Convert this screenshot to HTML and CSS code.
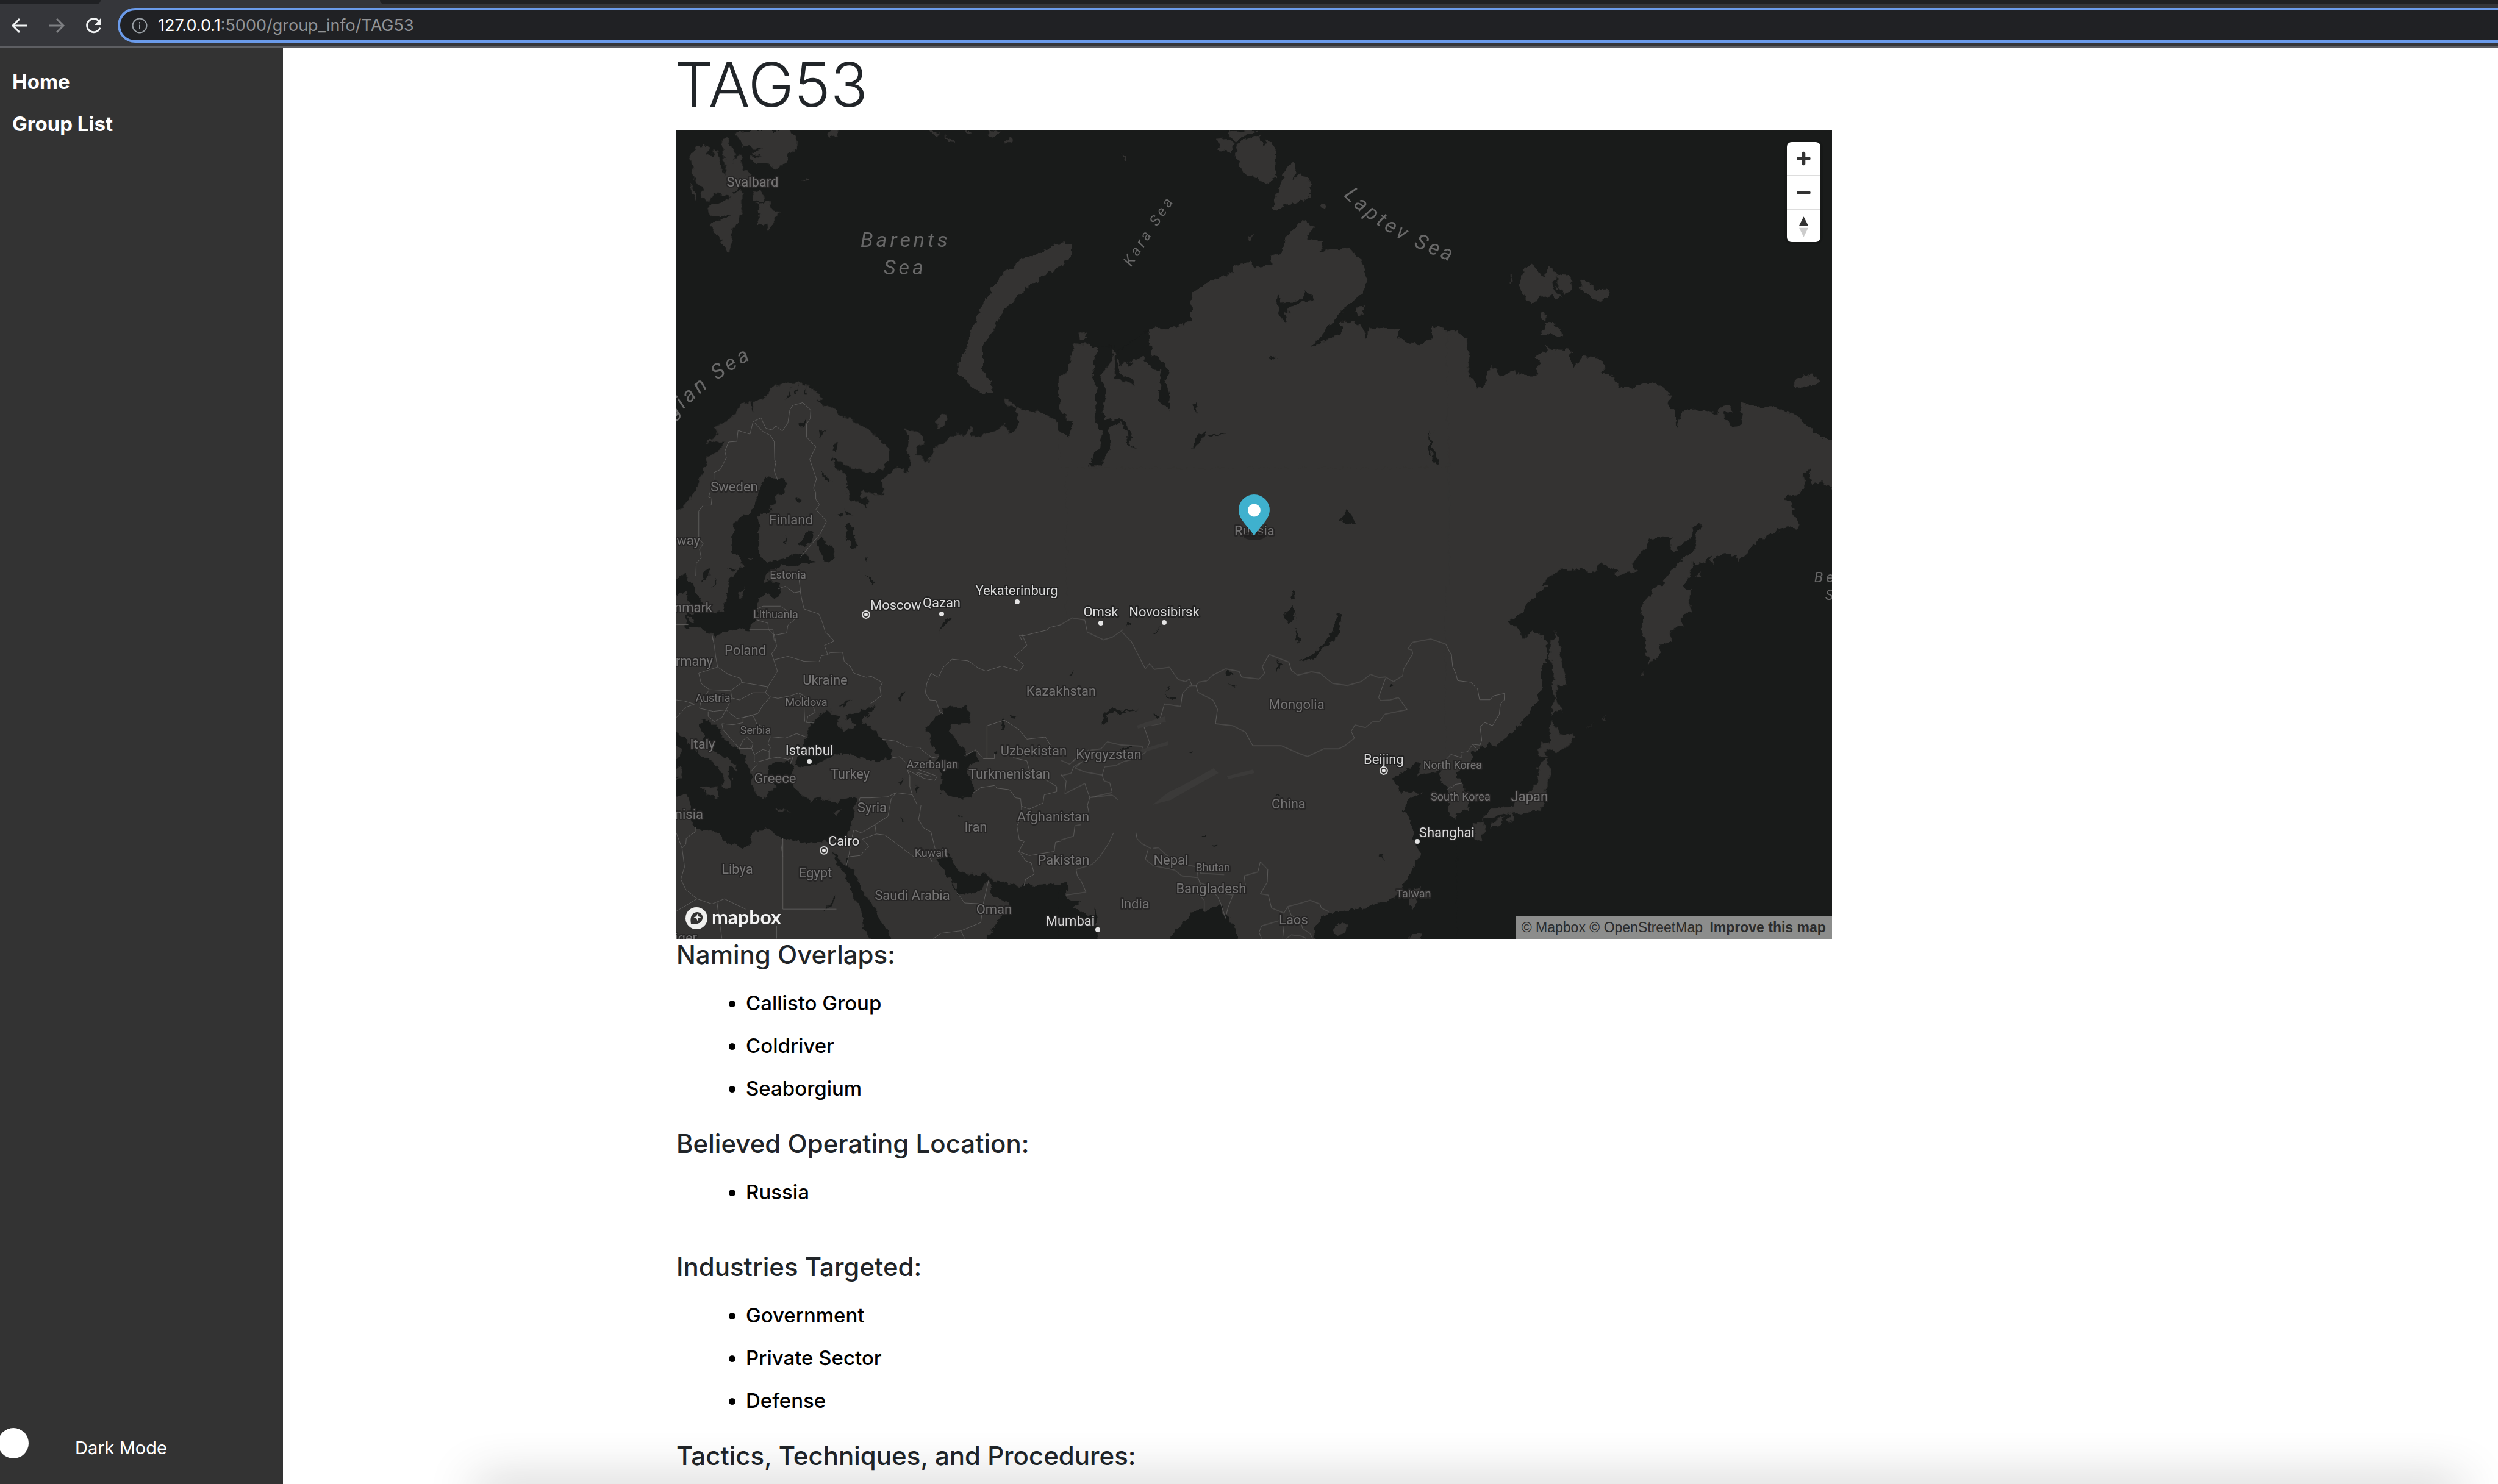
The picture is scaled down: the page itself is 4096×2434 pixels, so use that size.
FILE: index.html
```html
<!DOCTYPE html>
<html lang="en">
<head>
<meta charset="utf-8">
<title>TAG53</title>
<link rel="stylesheet" href="styles.css">
</head>
<body>
<header class="browser">
  <div class="tabs"><span class="tab-before"></span><span class="tab-active"></span><span class="tab-after"></span></div>
  <div class="toolbar">
    <button class="tool" type="button" aria-label="Back"><svg viewBox="0 0 32 32"><path d="M28 16H5M16 5L5 16l11 11"/></svg></button>
    <button class="tool tool-off" type="button" aria-label="Forward"><svg viewBox="0 0 32 32"><path d="M4 16h23M16 5l11 11-11 11"/></svg></button>
    <button class="tool" type="button" aria-label="Reload"><svg viewBox="0 0 32 32"><path d="M26 19.500A11 11 0 1 1 24 8.500"/><path class="solid" d="M28 3v12H17z"/></svg></button>
    <div class="address">
      <svg class="info" viewBox="0 0 28 28"><circle cx="14" cy="14" r="11.500"/><path d="M14 12.500v7.500M14 8v2.500"/></svg>
      <div class="url" role="textbox" aria-label="Address"><span class="host">127.0.0.1</span>:5000/group_info/TAG53</div>
    </div>
  </div>
</header>
<div class="layout">
  <aside class="sidebar">
    <nav class="nav">
      <a href="#home">Home</a>
      <a href="#groups">Group List</a>
    </nav>
    <label class="mode"><input type="checkbox" class="switch"><span>Dark Mode</span></label>
  </aside>
  <main class="main">
    <article class="group">
      <h1>TAG53</h1>
      <div class="map">
        <svg class="canvas" viewBox="1109 214 1895 1326" role="img" aria-label="Map">
          <defs>
            <filter id="rough" filterUnits="userSpaceOnUse" x="1080" y="180" width="1960" height="1390" color-interpolation-filters="sRGB">
              <feTurbulence type="fractalNoise" baseFrequency="0.09" numOctaves="3" seed="4"/>
              <feDisplacementMap in="SourceGraphic" scale="12" xChannelSelector="R" yChannelSelector="G"/>
            </filter>
            <path id="kara" d="M1855 438Q1880 398 1935 315"/>
            <path id="laptev" d="M2203 321Q2270 395 2410 440"/>
            <path id="norse" d="M1030 785Q1115 650 1235 587"/>
          </defs>
          <g filter="url(#rough)">
            <g class="land">
              <path d="M1618 485L1600 526 1590 554 1582 576 1569 597 1571 613 1594 633 1606 644 1631 645 1627 633 1612 604 1612 569 1627 544 1639 519 1663 490 1712 450 1740 437 1757 420 1757 402 1745 395 1731 403 1671 428 1651 445 1631 467z"/>
              <path d="M1730 750H2388V1050H1730z"/>
              <g transform="translate(1100 70) scale(.4082 .3333)">
                <path d="M75 545L105 515 155 510 140 545 165 560 180 520 195 560 205 620 220 660 205 480 225 475 245 510 265 545 250 590 275 550 290 600 285 625 325 640 300 700 240 735 290 730 290 800 270 890 245 920 243 1000 230 1028 203 990 215 970 170 930 160 890 240 850 155 855 150 810 230 775 245 755 175 745 150 787 120 750 130 710 95 690 85 600zM262 450L300 432 480 432 508 470 505 520 475 545 465 590 420 620 395 598 340 590 312 555 365 560 320 540 370 520 290 515 275 480zM325 740L370 730 375 780 335 775zM345 790L400 780 410 830 430 830 415 890 390 935 385 890 345 900 355 840zM625 465L640 432 670 432 665 455zM1035 435L1080 440 1065 460zM1170 432L1210 432 1200 448zM1270 460L1280 432 1330 440 1295 465zM1100 455L1145 493 1115 488zM1340 490L1365 468 1370 490zM70 680L100 740 108 785 85 740zM528 680L545 665 565 680 545 675z"/>
              </g>
              <g transform="translate(1100 490) scale(.4082 .35714)">
                <path d="M-12 990L60 950 100 880 125 800 150 730 190 695 215 655 140 662 190 622 175 590 230 560 290 480 370 465 400 410 470 385 530 385 570 420 608 455 590 475 660 510 690 545 730 555 790 600 850 655 875 690 880 735 860 775 800 802 720 775 670 745 645 722 662 762 708 820 705 870 715 920 750 935 785 962 795 935 757 890 770 872 835 908 855 892 842 840 905 770 955 802 966 745 950 710 957 635 938 600 1000 615 1022 665 985 680 985 715 1015 747 1050 735 1058 683 1130 630 1180 620 1205 580 1205 635 1240 635 1300 605 1345 575 1360 622 1385 610 1400 575 1385 500 1470 515 1530 550 1590 600V1580H-12zM1340 450L1385 490 1380 510 1342 480zM1068 545L1090 528 1115 555 1095 592 1070 590zM1590 360L1557 390 1560 530 1590 540z"/>
              </g>
              <path d="M1090 1035H2388V1560H1090z"/>
              <g transform="translate(1740 200) scale(.4082 .35714)">
                <path d="M-8 1178L20 1150 35 1100 55 1020 120 1025 145 1045 205 1030 220 1090 290 1070 350 1055 350 950 440 942 525 915 520 830 530 780 580 740 690 690 690 665 760 640 780 675 850 655 838 615 890 600 900 530 970 450 1020 480 985 525 1055 550 1040 605 1080 580 1160 580 1200 630 1225 690 1220 770 1180 820 1130 860 1100 910 1060 955 1005 1035 1070 998 1130 965 1120 915 1165 915 1210 940 1222 985 1240 945 1280 938 1355 955 1355 990 1400 1015 1450 1020 1485 1000 1490 940 1590 965V1590H-8zM665 40L790 36 740 60 705 90 685 65zM718 90L800 60 810 112 830 80 862 115 858 210 860 260 825 285 780 250 730 240 715 180 692 155zM630 78L665 72 700 100 680 138 632 130zM930 185L945 200 935 262 965 230 1000 285 1003 340 940 375 890 380 858 410 850 400 880 290 905 210zM1180 850L1215 848 1212 880 1190 893zM72 970L100 963 112 995 75 1005zM235 148L268 165 260 173zM1035 378L1068 378 1062 392zM748 540L770 520 765 548zM300 1020L315 1005 322 1040zM255 1080L285 1055 290 1070z"/>
              </g>
              <g transform="translate(2380 200) scale(.4082 .4209)">
                <path d="M-15 825L25 812 65 850 72 920 65 970 90 1020 120 1045 135 1020 145 970 160 948 205 993 240 972 300 985 345 985 350 930 332 915 385 892 375 868 400 885 470 890 520 912 570 915 605 930 617 955 600 970 650 995 672 1032 720 1035 780 1018 830 1022 880 1060 872 1110 905 1125 985 1120 1065 1138 1095 1098 1127 1105 1125 1130 1098 1130 1100 1155 1130 1188 1160 1185 1170 1155 1160 1095 1240 1110 1305 1110 1390 1150 1470 1220 1550 1275V1330H-15zM280 600L290 575 325 550 350 585 375 605 378 570 395 560 430 595 410 620 420 665 445 680 415 690 400 672 350 690 325 706 300 690 275 650zM425 600L450 588 487 615 475 660 455 670 425 650zM515 650L525 615 575 640 575 652 625 650 635 675 600 696 565 690zM345 823L370 815 385 785 410 778 440 808 444 840 390 828zM360 745L380 743 378 770 362 770zM237 595L248 605 240 633zM1375 1035L1380 1010 1410 985 1450 980 1473 1008 1450 1028z"/>
              </g>
              <g transform="translate(2500 700) scale(.3333)">
                <path d="M-370 60H1540V340L1495 280 1465 265 1415 280 1405 235 1415 205 1370 230 1380 300 1340 335 1285 340 1285 360 1315 370 1330 440 1350 470 1340 505 1290 490 1230 515 1150 560 1110 610 1050 668 1035 635 990 625 945 640 920 680 918 635 880 675 830 665 820 730 785 770 790 800 820 805 808 860 822 900 785 910 775 955 785 985 740 990 715 1020 715 1060 670 1075 668 1110 612 1180 600 1110 580 990 578 900 590 860 620 835 620 800 680 775 720 710 780 650 835 605 845 560 850 510 880 500 860 482 820 495 820 550 780 575 735 618 718 600 728 540 700 545 650 540 610 565 600 600 540 650 530 690 560 705 540 715 450 735 440 715 465 710 380 680 340 710 250 700 170 705 140 725 95 770 80 800 5 880-84 969H-370zM838 745L865 718 868 732z"/>
              </g>
              <g transform="translate(2380 950) scale(.4082 .38265)">
                <path d="M420 220L430 260 440 340 465 455 430 450 418 510 445 575 425 562 403 585 405 560 412 510 405 460 410 380 395 335 400 265 415 258zM400 610L440 660 487 665 490 700 460 715 435 745 400 725 375 735 380 760 352 760 348 730 365 695 390 705zM355 785L385 770 403 835 378 890 370 970 340 990 280 1010 250 1000 238 1045 225 1030 240 1000 115 1030 165 980 245 975 250 950 310 915 345 870zM155 1045L205 1020 200 1050 160 1068zM88 1050L130 1035 135 1080 115 1125 95 1115zM755 415L775 388 765 412zM542 640L580 610 550 632zM605 602L625 582 612 600z"/>
              </g>
            </g>
            <g class="water">
              <g transform="translate(1100 490) scale(.4082 .35714)">
                <path d="M380 820L455 830 460 885 430 900 400 965 350 1000 355 1080 350 1165 390 1210 450 1190 530 1165 585 1212 530 1220 450 1230 400 1245 385 1270 370 1305 400 1300 440 1305 435 1370 410 1380 385 1345 350 1380 345 1480 320 1500 310 1522 270 1515 175 1548 150 1520 140 1480 150 1440 210 1430 225 1360 235 1290 292 1220 270 1175 245 1160 250 1050 280 1005 335 965 350 900 360 850zM-12 1300L60 1265 95 1330 125 1400 170 1430 160 1540 110 1510 60 1510 60 1460 95 1440 70 1380 65 1350-12 1375zM585 1115L605 1100 658 1150 655 1195 615 1212zM705 1030L735 1050 735 1100 752 1130 735 1150 700 1090zM695 965L730 995 705 992zM645 690L668 655 665 695zM595 600L625 600 600 640zM600 790L652 845 620 830zM505 580L548 545 530 590zM515 1130L550 1060 575 1075 560 1120 530 1140zM455 1090L468 1130 460 1130zM775 1190L795 1195 785 1206zM780 1265L820 1300 810 1318zM120 1300L130 1260 160 1245 160 1270zM165 1330L180 1280 185 1290zM215 1238L265 1240 250 1250zM497 915L528 925 512 938zM455 470L485 400 470 450zM495 440L512 395 505 435zM530 440L545 400 540 440zM320 480L330 530 335 480zM670 990L690 988 685 1003zM1070 1550L1100 1465 1125 1465 1080 1520z"/>
              </g>
              <g transform="translate(1100 1040) scale(.4082 .338)">
                <path d="M-12 465L50 490 85 550 140 600 200 660 215 710 205 742 240 742 243 700 225 670 240 645 275 668 250 625 190 580 160 560 130 500 115 450 122 415 150 410 160 440 185 440 205 500 245 545 300 585 305 650 325 690 330 735 350 790 380 798 395 760 420 745 395 690 388 635 420 622 485 625 495 640 480 700 510 765 560 810 600 795 640 812 700 800 745 790 738 860 725 920 705 985 640 1000 560 1018 450 990 380 940 325 965 318 1020 295 1040 210 1000 190 965 100 935 80 900 80 820 65 785-12 775zM625 370L680 400 665 430 690 470 740 440 700 400 760 375 825 340 800 380 770 425 810 460 850 510 890 560 885 600 830 622 780 612 720 580 670 580 610 615 550 645 500 640 545 500 560 450 600 390zM1105 360L1190 350 1205 430 1140 435 1115 465 1150 520 1180 570 1185 600 1225 570 1238 620 1200 635 1190 680 1215 710 1215 790 1160 800 1090 770 1080 730 1090 690 1060 620 1075 590 1050 550 1045 500 1025 460 1050 420zM648 1055L700 1125 710 1070 712 1115 745 1180 775 1260 820 1330 830 1370 900 1500 815 1500 775 1430 765 1340 730 1270 700 1170 655 1085zM1068 1100L1115 1060 1145 1130 1200 1170 1270 1160 1300 1200 1400 1225 1590 1210V1520H1245L1310 1400 1365 1310 1290 1270 1278 1190 1240 1250 1160 1265 1145 1250 1115 1180zM905 315L940 275 920 325zM675 355L690 330 722 325zM1335 400L1325 465 1340 460zM980 730L1000 750 990 775zM908 715L940 705 925 730zM925 885L940 905 932 910zM615 1340L665 1270 650 1315zM1365 400L1393 395 1375 410zM1152 875L1168 880 1160 890zM1300 570L1320 575 1305 592z"/>
              </g>
              <g transform="translate(1740 900) scale(.4082 .4209)">
                <path d="M-10 1325L40 1370 85 1375 50 1400 130 1435 135 1395 152 1560H-10zM425 1530L510 1440 520 1415 580 1410 635 1385 665 1430 700 1470 720 1560H405zM1330 890L1380 870 1420 835 1445 835 1435 885 1520 868 1530 910 1555 935 1560 1040 1590 1060V1560H1025L1015 1480 1050 1430 1120 1412 1240 1395 1340 1360 1385 1300 1440 1190 1420 1140 1400 1050 1370 1025 1400 970 1455 950 1365 950zM960 432L1000 422 1060 365 1090 320 1110 255 1130 255 1110 345 1060 380 1020 425 990 440zM165 680L175 640 200 625 310 630 240 638 190 645 178 685zM655 485L670 475 690 485 670 500zM865 480L875 430 882 450zM370 640L395 655 385 665zM415 570L458 582 450 592zM420 560L430 532 440 530zM235 780L290 770 260 790zM925 200L935 150 940 190zM890 255L935 225 950 290 940 250 915 290zM940 310L962 355 950 370zM1312 550L1325 528 1332 535zM1285 1200L1295 1185 1300 1215zM262 290L282 290 272 303zM855 960L875 955 880 968zM505 795L530 790 520 800zM370 333L405 300 375 333zM38 485L58 473 45 492zM672 528L700 533 690 540zM560 1120L582 1116 575 1126zM605 1153L626 1155 612 1162z"/>
              </g>
              <g transform="translate(1740 200) scale(.4082 .35714)">
                <path d="M148 1040L205 1025 208 1100 155 1165 185 1245 170 1310 172 1372 230 1358 270 1395 285 1445 268 1480 305 1498 265 1490 262 1420 240 1385 192 1400 195 1500 160 1580 108 1580 155 1490 165 1420 138 1380 135 1290 145 1215 120 1160 135 1110zM215 1025L225 1100 240 1152 290 1185 295 1212 215 1175zM350 950L362 1065 400 1090 432 1140 420 1190 438 1260 435 1320 390 1280 405 1140 370 1138 330 1080 235 1115 225 1050zM-10 1325L25 1360 47 1395 25 1447-10 1395zM870 785L885 830 965 820 975 775 1015 810 900 855 920 880 895 870 905 920 893 920 865 850zM842 1072L862 1080 848 1097zM525 1508L545 1440 585 1415 550 1480zM592 1440L665 1430 600 1448zM530 1295L545 1290 545 1340zM1470 1500L1497 1410 1478 1470 1485 1545zM255 1105L290 1105 275 1125z"/>
              </g>
              <path d="M1735 672L1750 690 1756 702 1750 718 1735 702zM2341 704L2350 735 2360 760 2356 765 2344 735zM2197 853L2210 838 2225 862 2212 860zM2385 1036L2406 1030 2394 1046zM2438 1208L2446 1200 2442 1196z"/>
              <path d="M2572 585L2582 575 2600 575 2582 604zM2747 668L2758 672 2752 702z"/>
            </g>
            <g class="land">
              <g transform="translate(1100 1040) scale(.4082 .338)"><path d="M118 748L190 738 188 798 150 785zM415 848L485 858 440 864zM645 870L692 848 665 882zM-12 540L42 560 38 600-12 620zM-12 635L47 650 40 700-12 705zM1130 1210L1150 1200 1148 1245z"/></g>
              <g transform="translate(1740 900) scale(.4082 .4209)"><path d="M1092 1485L1115 1462 1152 1462 1135 1500 1108 1507zM1395 1365L1410 1335 1442 1318 1430 1370 1410 1408zM1405 1502L1450 1500 1450 1550 1405 1550z"/></g>
              <g transform="translate(1100 490) scale(.4082 .35714)"><path d="M270 1350L298 1325 280 1380zM308 1190L325 1192 318 1204zM375 1270L392 1270 390 1282zM75 1465L95 1460 100 1490 80 1485z"/></g>
              <path d="M2380 1208L2442 1190 2452 1196 2446 1218 2413 1235 2412 1248 2388 1268 2388 1275 2398 1285 2408 1312 2406 1329 2380 1338 2376 1290 2366 1275z"/>
              <path d="M2370 960H2541L2520 972 2499 1000 2472 1023 2488 1028 2498 1048 2511 1036 2527 1040 2538 1053 2537 1080 2529 1092 2526 1138 2502 1176 2478 1203 2453 1224 2440 1218 2414 1235H2370z"/>
            </g>
          </g>
          <g class="border">
            <g transform="translate(1100 490) scale(.4082 .35714)">
              <path d="M100 1272L102 1215 122 1190 115 1150 130 1125 112 1100V975L130 948 162 948 165 915 152 910 173 830V798L198 785 223 730 217 700 232 658 265 655 270 605 318 622 330 565 362 547 382 595 405 602 422 585 448 607 470 570 478 510 490 490 530 477 562 512 560 550 545 575 545 635 582 680 558 738 585 828 573 870 582 890 582 920 597 945 583 968 625 1022 600 1080 518 1190M335 568L370 610 400 628 415 655 417 740 422 750 415 790 430 835M345 1425L370 1412 440 1412 475 1440 500 1470 470 1500 465 1535 415 1545 392 1520 390 1490 345 1475M432 1332L460 1320 495 1350 520 1345 525 1375 535 1425 595 1448 610 1490 620 1530 655 1570M515 1290L522 1350M315 1520H410L415 1570M22 1497H70M165 1545L170 1570M1568 1497L1520 1510 1510 1522 1415 1548 1400 1545 1410 1570"/>
            </g>
            <g transform="translate(1100 1040) scale(.4082 .338)">
              <path d="M165 0L175 60 180 110 188 160 112 190 122 240 155 270 240 275 285 235 280 215 230 195 188 160M415 0L425 60 405 95 428 180 390 255 285 235M390 255L380 285 330 285 275 320 245 310 240 275M155 270L120 330 115 360 170 375 222 368 245 310M380 285L400 305 370 345 350 385 290 405 265 410 222 368M22 320L55 325 95 340 60 355 22 405M150 375L150 400 175 425 205 405 220 370M205 435L250 440 290 430 290 405 330 395 345 435 370 450M205 435L210 465 275 555 290 515 305 500 330 530 325 555 275 555M305 550L322 548 335 585 335 615 348 630 320 670M335 585L370 560 395 570 395 605 350 620M395 605L430 598 470 608 490 600 480 630M400 498L390 530 400 550 395 570M400 498L460 505 505 483 545 500M400 305L430 312 480 300 515 285 545 310 570 345 580 380 550 400 545 430 575 430M515 285L535 350 538 425M415 125L470 108 535 132 595 135 605 105 630 100 640 90 690 88 697 135 720 155 735 190 785 210 805 205 850 235 840 260 845 300 800 340M630 100L617 55 655 35 632 0M1410 0L1430 55 1380 108 1418 150 1400 180 1330 155 1265 180 1235 165 1195 130 1130 122 1095 160 1075 210 1045 190 1028 240 1022 285 1040 320 1065 322 1080 375 1095 390M850 510L905 520 950 548 1000 550 1015 570 1050 600 1075 595M890 600L920 595 950 630 1000 660 1070 690 1060 710 1015 700 950 660 960 690 960 740 970 780 905 770 870 790 800 795 760 795 755 820M1015 700L985 670 1045 690M970 780L990 830 1005 830 1000 870 995 900 1015 940 1045 960 1055 1010 1065 1060M905 770L885 800 872 885 820 925 765 965 735 950M820 925L825 970 770 995 795 1030 760 1075 720 1080M825 970L860 975 975 1080 1040 1085 1050 1105 1070 1105M735 950L725 1000 715 1075 705 1125M1270 605V445L1340 418 1400 465 1430 510 1505 500 1535 560M1270 605H1300L1300 580M1180 590L1225 562 1255 605H1270M1375 600L1430 615 1440 660 1550 740 1550 765 1500 780 1495 820 1440 850 1408 835 1405 798 1385 795 1360 755 1310 748 1300 735 1245 745 1215 770M1408 835L1410 890 1390 930 1400 1000 1420 1005 1398 1055 1425 1100 1448 1110 1460 1165 1425 1190 1418 1225M1398 1055L1440 1075 1540 1055 1545 1010 1568 1005M450 990V1335H665M450 990L445 1040 450 1080M22 965L45 1040 55 1130 40 1190 60 1240 105 1285 165 1310 215 1285 300 1335M105 1285L22 1345M98 935V960L62 990 60 1020 45 1040M185 1300L205 1478M425 1415V1478M1150 1255L1180 1305 1230 1308 1255 1310 1270 1230 1278 1190M1255 1310L1245 1400 1165 1440 1180 1478M1165 1440L1085 1452 1055 1478"/>
            </g>
            <g transform="translate(1740 900) scale(.4082 .4209)">
              <path d="M0 295L45 270 95 278 105 325 170 355 205 345 250 315M245 325L282 362 338 468 355 448 375 470 435 462 470 510 500 518 515 508 525 533 515 535 487 565 480 615 415 605 395 670 400 682 332 692 355 755 338 795 325 770 240 765 185 753 160 780 120 785 45 830M525 533H542L552 520 585 515 605 495 660 468 715 478 725 500 795 508 818 485 808 460 835 412 915 442 925 475 950 493 1005 480 1040 485 1090 525 1150 533 1205 518 1243 490 1275 502 1303 500 1335 518 1372 495 1375 470 1412 410 1410 395 1392 390 1412 365 1485 352 1545 372 1568 415M542 533L550 560 610 590 628 625 620 682 690 690 740 715 770 768H885L955 798 990 810 1055 780H1115L1140 768 1178 738 1165 712 1180 687 1223 697 1250 675 1280 672 1300 645 1390 627 1355 580 1320 590 1283 592 1275 580 1303 505M0 825L35 840 60 815 110 785M0 885L40 875 50 850 85 830 55 855 95 870 165 882 175 850 220 845 250 830 290 820 338 795M0 880L20 905 15 955 95 915 115 970 205 950 195 912 172 905 165 882M115 970L205 960 228 978M115 970L105 1000 112 1030M80 1075L55 1080 50 1120 0 1135M210 1108L190 1150 155 1200 125 1230 60 1250 65 1275 80 1295 100 1338 20 1350M350 1170L338 1210 370 1235 455 1252 485 1275 550 1282 548 1262M370 1168L390 1165 430 1200 460 1225 548 1240 560 1265 655 1270M550 1282L560 1310 545 1340 575 1370 575 1415M555 1300L600 1320 630 1360 640 1380 660 1440 670 1400 690 1350 630 1340M690 1350L740 1310 735 1275 790 1260 800 1220 830 1250 828 1300 800 1345 832 1350 845 1400 895 1420 910 1395 960 1382 1000 1370 1040 1385 1045 1400 1075 1415M910 1395L925 1430 960 1445 970 1480 1000 1500 1010 1519M875 1450L805 1470 795 1495 805 1519M890 1519L895 1470M905 1519L925 1505 965 1510 985 1519M300 1105L305 1130 325 1150 360 1168M1505 865L1568 800M1550 940L1568 925"/>
            </g>
            <g transform="translate(2380 950) scale(.4082 .38265)">
              <path d="M0 320L5 375 18 405 25 435 78 442 105 470 113 517H155L170 500 213 490 212 518 197 535 192 580 165 628 135 615 115 632 122 690 115 712 85 708 65 740 38 743 40 765 0 752M85 708L105 732M0 895L15 880 45 875"/>
            </g>
          </g>
          <g class="relief">
            <path d="M1890 1320L1915 1300 1945 1285 1990 1260 1998 1268 1955 1292 1920 1312zM2012 1273L2055 1262 2057 1268 2014 1278zM1864 1190L1910 1175 1912 1184 1866 1195zM1870 1230L1915 1216 1916 1222 1874 1234z"/>
          </g>
          <g class="country">
            <text x="1234" y="306">Svalbard</text>
            <text x="1204" y="806">Sweden</text>
            <text x="1297" y="860">Finland</text>
            <text class="end" x="1148" y="894">Norway</text>
            <text class="end" x="1168" y="1004">Denmark</text>
            <text x="1222" y="1074">Poland</text>
            <text class="end" x="1169" y="1092">Germany</text>
            <text x="1353" y="1123">Ukraine</text>
            <text x="1152" y="1228">Italy</text>
            <text x="1271" y="1284">Greece</text>
            <text x="1394" y="1277">Turkey</text>
            <text x="1655" y="1277">Turkmenistan</text>
            <text x="1695" y="1239">Uzbekistan</text>
            <text x="1740" y="1141">Kazakhstan</text>
            <text x="1430" y="1332">Syria</text>
            <text class="end" x="1153" y="1343">Tunisia</text>
            <text x="1600" y="1364">Iran</text>
            <text x="1727" y="1347">Afghanistan</text>
            <text x="1209" y="1433">Libya</text>
            <text x="1337" y="1439">Egypt</text>
            <text x="1496" y="1476">Saudi Arabia</text>
            <text x="1630" y="1499">Oman</text>
            <text class="end" x="1143" y="1546">Niger</text>
            <text x="1744" y="1418">Pakistan</text>
            <text x="2126" y="1163">Mongolia</text>
            <text x="1818" y="1245">Kyrgyzstan</text>
            <text x="2113" y="1326">China</text>
            <text x="1920" y="1418">Nepal</text>
            <text x="1986" y="1465">Bangladesh</text>
            <text x="1861" y="1490">India</text>
            <text x="2121" y="1516">Laos</text>
            <text x="2508" y="1314">Japan</text>
            <text x="2057" y="878">Russia</text>
          </g>
          <g class="country small">
            <text x="1292" y="949">Estonia</text>
            <text x="1272" y="1014">Lithuania</text>
            <text x="1169" y="1151">Austria</text>
            <text x="1322" y="1158">Moldova</text>
            <text x="1239" y="1204">Serbia</text>
            <text x="1529" y="1260">Azerbaijan</text>
            <text x="1527" y="1405">Kuwait</text>
            <text x="2382" y="1261">North Korea</text>
            <text x="2395" y="1313">South Korea</text>
            <text x="1989" y="1429">Bhutan</text>
            <text x="2318" y="1472">Taiwan</text>
          </g>
          <g class="sea">
            <text class="big" x="1485" y="405">Barents</text>
            <text class="big" x="1484" y="450">Sea</text>
            <text class="mid start" x="2975" y="955">Bering</text>
            <text class="mid start" x="2993" y="984">Sea</text>
            <text class="mid start"><textPath href="#kara">Kara Sea</textPath></text>
            <text class="big start"><textPath href="#laptev">Laptev Sea</textPath></text>
            <text class="big start"><textPath href="#norse" startOffset="100%" text-anchor="end">Norwegian Sea</textPath></text>
          </g>
          <g class="city">
            <text class="start" x="1427" y="1000">Moscow</text>
            <text x="1544" y="996">Qazan</text>
            <text x="1667" y="976">Yekaterinburg</text>
            <text x="1805" y="1011">Omsk</text>
            <text x="1909" y="1011">Novosibirsk</text>
            <text x="1327" y="1238">Istanbul</text>
            <text class="start" x="1358" y="1387">Cairo</text>
            <text x="1755" y="1518">Mumbai</text>
            <text x="2269" y="1253">Beijing</text>
            <text class="start" x="2327" y="1373">Shanghai</text>
          </g>
          <g class="dots">
            <circle cx="1544" cy="1007" r="4"/><circle cx="1668" cy="987" r="4"/><circle cx="1805" cy="1022" r="4"/><circle cx="1909" cy="1021" r="4"/><circle cx="1327" cy="1249" r="4"/><circle cx="1800" cy="1525" r="4"/><circle cx="2324" cy="1380" r="4"/>
            <circle cx="1420" cy="1008" r="3"/><circle cx="1351" cy="1395" r="3"/><circle cx="2269" cy="1264" r="3"/>
            <g class="ring"><circle cx="1420" cy="1008" r="6"/><circle cx="1351" cy="1395" r="6"/><circle cx="2269" cy="1264" r="6"/></g>
          </g>
          <ellipse class="pin-shade" cx="2057" cy="879" rx="18" ry="7"/>
          <path class="pin" d="M2056.500 879C2049 865 2031 853 2031 836.500a25.500 25.500 0 0 1 51 0C2082 853 2064 865 2056.500 879z"/>
          <circle class="pin-eye" cx="2056.500" cy="837" r="10.500"/>
        </svg>
        <div class="zoom">
          <button type="button" aria-label="Zoom in"><svg viewBox="0 0 29 29"><path d="M14.500 8.500c-.8 0-1.500.7-1.500 1.500v3h-3a1.500 1.500 0 0 0 0 3h3v3a1.500 1.500 0 0 0 3 0v-3h3a1.500 1.500 0 0 0 0-3h-3v-3c0-.8-.7-1.500-1.500-1.500z"/></svg></button>
          <button type="button" aria-label="Zoom out"><svg viewBox="0 0 29 29"><path d="M10 13a1.500 1.500 0 0 0 0 3h9a1.500 1.500 0 0 0 0-3z"/></svg></button>
          <button type="button" aria-label="Reset bearing"><svg viewBox="0 0 29 29"><path d="M10.500 14l4-8 4 8z"/><path class="south" d="M10.500 16l4 8 4-8z"/></svg></button>
        </div>
        <a class="brand" href="#mapbox"><svg viewBox="0 0 36 36"><circle cx="18" cy="18" r="18"/><path class="brand-drop" d="M9 27c-1-6-1-12 3-16 4-4 10-4 13.500-.5S29 20 25 24c-4 4-10 4-16 3z"/><path d="M19.500 10.500l1.600 4.400 4.400 1.600-4.400 1.600-1.600 4.400-1.600-4.400-4.400-1.600 4.400-1.600z"/></svg><span>mapbox</span></a>
        <div class="credits"><a href="#mapbox">© Mapbox</a> <a href="#osm">© OpenStreetMap</a> <a class="improve" href="#improve">Improve this map</a></div>
      </div>
      <section>
        <h2>Naming Overlaps:</h2>
        <ul><li>Callisto Group</li><li>Coldriver</li><li>Seaborgium</li></ul>
      </section>
      <section class="located">
        <h2>Believed Operating Location:</h2>
        <ul><li>Russia</li></ul>
      </section>
      <section>
        <h2>Industries Targeted:</h2>
        <ul><li>Government</li><li>Private Sector</li><li>Defense</li></ul>
      </section>
      <section>
        <h2>Tactics, Techniques, and Procedures:</h2>
      </section>
    </article>
  </main>
</div>
<div class="edge-shadow"></div>
</body>
</html>
```

FILE: styles.css
```css
* { box-sizing: border-box; }

body {
  margin: 0;
  min-height: 100vh;
  display: flex;
  flex-direction: column;
  overflow: hidden;
  background: #fff;
  color: #212529;
  font-family: Inter, "Liberation Sans", sans-serif;
}

a { color: inherit; text-decoration: none; }
button { border: 0; padding: 0; background: none; }

/* Browser bar */
.browser {
  background: #35363a;
  border-bottom: 2px solid #5d5e62;
  overflow: hidden;
}
.tabs { display: flex; height: 7px; background: #35363a; }
.tab-before { width: 165px; background: #202124; border-bottom-right-radius: 7px; }
.tab-active { width: 458px; }
.tab-after { flex: 1; background: #202124; border-bottom-left-radius: 7px; }
.toolbar {
  display: flex;
  align-items: center;
  padding: 6px 0 6px 16px;
  height: 69px;
}
.tool { width: 32px; height: 32px; margin-right: 29px; color: #f1f3f4; }
.tool svg { display: block; width: 32px; height: 32px; fill: none; stroke: currentColor; stroke-width: 3; }
.tool .solid { fill: currentColor; stroke: none; }
.tool-off { color: #7f8083; }
.address {
  flex: 1;
  display: flex;
  align-items: center;
  gap: 16px;
  height: 57px;
  margin-right: -40px;
  margin-left: -6px;
  padding-left: 18px;
  border: 4px solid #6b9bea;
  border-radius: 29px;
  background: #202124;
}
.info { width: 28px; height: 28px; fill: none; stroke: #9aa0a6; stroke-width: 2; }
.url { color: #919396; font-size: 27px; line-height: 32px; }
.host { color: #fff; }

/* Page frame */
.layout { flex: 1; display: grid; grid-template-columns: 464px 1fr; }
.sidebar {
  display: flex;
  flex-direction: column;
  justify-content: space-between;
  background: #333;
  color: #fff;
}
.nav { display: flex; flex-direction: column; gap: 19px; padding: 31px 20px; }
.nav a { font-size: 33px; line-height: 50px; font-weight: 700; }
.mode {
  display: flex;
  align-items: center;
  gap: 76px;
  padding-bottom: 42px;
  font-size: 29px;
  line-height: 50px;
}
.mode span { padding-top: 8px; }
.switch {
  appearance: none;
  align-self: flex-start;
  width: 50px;
  height: 50px;
  margin: 0 0 0 -3px;
  border-radius: 50%;
  background: #fff;
}

.group { width: 52.17%; margin-left: 17.76%; }
h1 { margin: 0 0 16px -3px; font-size: 101px; line-height: 120px; font-weight: 300; }
h2 { margin: 0 0 28px; font-size: 42px; line-height: 52px; font-weight: 500; }
ul { margin: 0 0 40px; padding-left: 114px; color: #000; }
li { margin-bottom: 20px; font-size: 33px; line-height: 50px; font-weight: 500; }
li:last-child { margin-bottom: 0; }
.located ul { margin-bottom: 72px; }

/* Map */
.map { position: relative; overflow: hidden; background: #191b1a; }
.canvas { display: block; width: 100%; height: auto; font-family: Roboto, "Open Sans", sans-serif; }
.land { fill: #343332; }
.water { fill: #191b1a; }
.relief { fill: #3b3a39; }
.border path { fill: none; stroke: #5e5d5c; stroke-width: 1; vector-effect: non-scaling-stroke; }
.canvas text { text-anchor: middle; }
.canvas .end { text-anchor: end; }
.canvas .start { text-anchor: start; }
.country { fill: #757474; font-size: 22px; stroke: #262525; stroke-width: 4px; stroke-linejoin: round; }
.country text, .city text { paint-order: stroke; }
.small { font-size: 18px; }
.city { fill: #dadada; font-size: 22px; stroke: #222; stroke-width: 4px; stroke-linejoin: round; }
.sea { fill: #686868; font-style: italic; letter-spacing: 5px; }
.big { font-size: 34px; }
.mid { font-size: 24px; }
.dots { fill: #e4e4e4; }
.ring { fill: none; stroke: #dadada; stroke-width: 2; }
.pin { fill: #3fb1ce; }
.pin-eye { fill: #fff; }
.pin-shade { fill: #1e1d1d; opacity: .7; }

.zoom {
  position: absolute;
  top: 19px;
  right: 19px;
  width: 55px;
  border-radius: 8px;
  background: #fff;
  box-shadow: 0 0 0 4px rgba(0, 0, 0, .1);
}
.zoom button { display: block; width: 55px; height: 54px; }
.zoom button + button { height: 55px; border-top: 2px solid #ddd; }
.zoom svg { display: block; width: 55px; height: 54px; fill: #333; }
.zoom .south { fill: #ccc; }

.brand {
  position: absolute;
  left: 15px;
  bottom: 12px;
  display: flex;
  align-items: center;
  gap: 7px;
  height: 44px;
  color: #f2f2f2;
  font: 700 32px/40px Lato, sans-serif;
}
.brand svg { width: 36px; height: 36px; fill: #f0f0ee; }
.brand .brand-drop { fill: #343332; }
.brand span { padding-bottom: 4px; }

.credits {
  position: absolute;
  right: 0;
  bottom: 0;
  padding: 0 10px;
  background: #8c8d8c;
  color: #2b2c2c;
  font: 23px/38px "Liberation Sans", sans-serif;
}
.improve { margin-left: 5px; font-weight: 700; }

/* Soft shadow along the window's lower edge */
.edge-shadow {
  position: fixed;
  left: 780px;
  right: 60px;
  bottom: -24px;
  height: 20px;
  box-shadow: 0 0 80px rgba(0, 0, 0, .45);
}
```
